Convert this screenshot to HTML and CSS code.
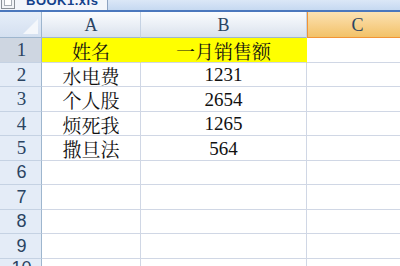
FILE: index.html
```html
<!DOCTYPE html>
<html lang="zh-CN">
<head>
  <meta charset="UTF-8">
  <title>BOOK1.xls</title>
  <link rel="stylesheet" href="styles.css">
</head>
<body>
  <!-- Workbook tab -->
  <div class="tabbar">
    <div class="tab">
      <svg class="tab-icon" width="16" height="10" viewBox="0 0 16 10">
        <rect x="1.5" y="-3.5" width="13" height="12" fill="#f2f4f7" stroke="#8a9097"/>
        <rect x="4.5" y="-1.5" width="7" height="7" fill="#ffffff" stroke="#a7adb5"/>
      </svg>
      <span class="tab-name">BOOK1.xls</span>
    </div>
  </div>
  <div class="rule"></div>

  <!-- Sheet -->
  <div class="sheet">
    <div class="corner"></div>
    <div class="col-head">A</div>
    <div class="col-head">B</div>
    <div class="col-head active">C</div>

    <div class="row-head current">1</div>
    <div class="cell fill">姓名</div>
    <div class="cell fill">一月销售额</div>
    <div class="cell"></div>

    <div class="row-head">2</div>
    <div class="cell">水电费</div>
    <div class="cell num">1231</div>
    <div class="cell"></div>

    <div class="row-head">3</div>
    <div class="cell">个人股</div>
    <div class="cell num">2654</div>
    <div class="cell"></div>

    <div class="row-head">4</div>
    <div class="cell">烦死我</div>
    <div class="cell num">1265</div>
    <div class="cell"></div>

    <div class="row-head">5</div>
    <div class="cell">撒旦法</div>
    <div class="cell num">564</div>
    <div class="cell"></div>

    <div class="row-head plain">6</div>
    <div class="cell"></div>
    <div class="cell"></div>
    <div class="cell"></div>

    <div class="row-head plain">7</div>
    <div class="cell"></div>
    <div class="cell"></div>
    <div class="cell"></div>

    <div class="row-head plain">8</div>
    <div class="cell"></div>
    <div class="cell"></div>
    <div class="cell"></div>

    <div class="row-head plain">9</div>
    <div class="cell"></div>
    <div class="cell"></div>
    <div class="cell"></div>

    <div class="row-head plain">10</div>
    <div class="cell"></div>
    <div class="cell"></div>
    <div class="cell"></div>
  </div>
</body>
</html>
```

FILE: styles.css
```css
/* General */
body {
  margin: 0;
  width: 400px;
  height: 266px;
  overflow: hidden;
  background: #ffffff;
  font-family: "Liberation Serif", "Noto Sans CJK SC", serif;
}

/* Workbook tab bar */
.tabbar {
  height: 10px;
  background: linear-gradient(#dbe7f7, #c6d9f1);
  overflow: hidden;
}
.tab {
  width: 107px;
  height: 10px;
  display: flex;
  align-items: flex-end;
  background: #f3f6fb;
  border-right: 1px solid #8da3c1;
}
.tab-icon {
  flex: none;
  margin-right: 10px;
  align-self: flex-start;
}
.tab-name {
  font-family: "Liberation Sans", sans-serif;
  font-size: 13px;
  font-weight: bold;
  color: #15428b;
  line-height: 13px;
  margin-bottom: 3px;
  letter-spacing: 0.5px;
}
.rule {
  height: 2px;
  background: #4a77bd;
}

/* Sheet grid */
.sheet {
  display: grid;
  grid-template-columns: 42px 99px 166px 100px;
  grid-template-rows: 26px 25px 24px 25px 24px 25px 24px 25px 24px 25px 20px;
}
.sheet > div {
  box-sizing: border-box;
  display: flex;
  align-items: center;
  justify-content: center;
}
.corner {
  background: linear-gradient(#e6eef9, #d4e0f0);
  border-right: 1px solid #9eb6ce;
  border-bottom: 1px solid #9eb6ce;
  position: relative;
}
.corner::after {
  content: "";
  position: absolute;
  right: 3px;
  bottom: 3px;
  border-style: solid;
  border-width: 0 0 15px 15px;
  border-color: transparent transparent #f4f7fb transparent;
}
.col-head {
  background: linear-gradient(#fafcfe, #e9eef5 55%, #d9e1ec);
  border-right: 1px solid #c5d2e3;
  border-bottom: 1px solid #9eb6ce;
  font-size: 18px;
  color: #2a4462;
  padding-top: 2px;
}
.col-head.active {
  background: linear-gradient(#fbe2b3, #f7d08a 55%, #f2c268);
  border-left: 1px solid #f29436;
  border-bottom: 1px solid #f29436;
  border-right: none;
}
.row-head {
  background: #e4ecf7;
  border-right: 1px solid #9eb6ce;
  border-bottom: 1px solid #c5d2e3;
  font-size: 19px;
  color: #2a4462;
  padding-left: 2px;
}
.row-head.current {
  background: #ced6e1;
}
.row-head.plain {
  font-family: "Liberation Sans", sans-serif;
  font-size: 18px;
}
.cell {
  border-right: 1px solid #d0d7e5;
  border-bottom: 1px solid #d0d7e5;
  font-family: "Noto Serif CJK SC", "Noto Sans CJK SC", sans-serif;
  font-size: 19px;
  color: #111111;
  padding-top: 1px;
}
.cell.num {
  font-family: "Liberation Serif", serif;
  font-size: 19px;
}
.cell.fill {
  background: #ffff00;
  border-right-color: #ffff00;
}
```
